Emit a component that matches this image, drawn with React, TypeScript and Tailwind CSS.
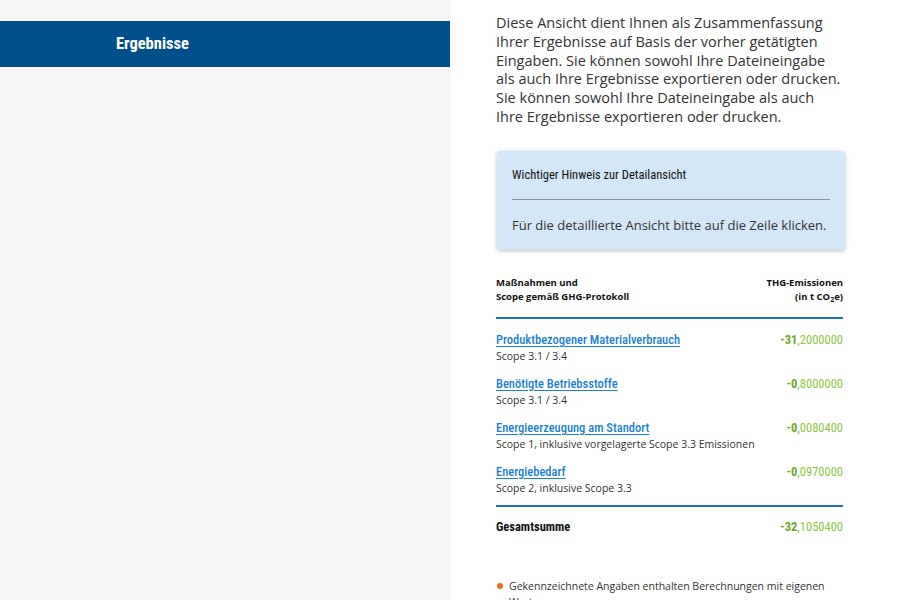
const rows = [
  { title: 'Produktbezogener Materialverbrauch', scope: 'Scope 3.1 / 3.4', whole: '-31', frac: ',2000000' },
  { title: 'Benötigte Betriebsstoffe', scope: 'Scope 3.1 / 3.4', whole: '-0', frac: ',8000000' },
  { title: 'Energieerzeugung am Standort', scope: 'Scope 1, inklusive vorgelagerte Scope 3.3 Emissionen', whole: '-0', frac: ',0080400' },
  { title: 'Energiebedarf', scope: 'Scope 2, inklusive Scope 3.3', whole: '-0', frac: ',0970000' },
];

export default function App() {
  return (
    <div className="flex w-[900px] h-[600px] overflow-hidden bg-white font-['Open_Sans',sans-serif]">
      <div className="w-[450px] h-full bg-[#f6f6f6] pt-[21px]">
        <div className="h-[46px] bg-[#004f8b] flex items-center pl-[116px]">
          <span className="text-white text-[16.5px] font-bold font-['Roboto_Condensed',sans-serif]">Ergebnisse</span>
        </div>
      </div>

      <div className="flex-1 pl-[46px] pr-[57px]">
        <p className="text-[14.5px] leading-[18.8px] text-[#333] pt-[14px]">
          Diese Ansicht dient Ihnen als Zusammenfassung<br />
          Ihrer Ergebnisse auf Basis der vorher getätigten<br />
          Eingaben. Sie können sowohl Ihre Dateineingabe<br />
          als auch Ihre Ergebnisse exportieren oder drucken.<br />
          Sie können sowohl Ihre Dateineingabe als auch<br />
          Ihre Ergebnisse exportieren oder drucken.
        </p>

        <div className="mt-[24px] ml-px -mr-[2px] bg-[#d4e7f8] rounded-[3px] shadow-[0_1px_4px_rgba(0,0,0,0.25)] px-[15px] pt-[16px] pb-[16px]">
          <div className="text-[12.5px] font-normal text-[#111] leading-[16px] font-['Roboto_Condensed',sans-serif]">Wichtiger Hinweis zur Detailansicht</div>
          <div className="h-px bg-[#8a8f96] mt-[16px] mb-[16px]" />
          <div className="text-[13px] text-[#333] leading-[18px]">Für die detaillierte Ansicht bitte auf die Zeile klicken.</div>
        </div>

        <div className="mt-[26px] flex justify-between text-[9.5px] font-bold text-[#111] leading-[14px]">
          <div>
            <div>Maßnahmen und</div>
            <div>Scope gemäß GHG-Protokoll</div>
          </div>
          <div className="text-right">
            <div>THG-Emissionen</div>
            <div>(in t CO<sub className="text-[7px]">2</sub>e)</div>
          </div>
        </div>
        <div className="h-[2px] bg-[#1f74c2] mt-[13px]" />

        <div className="pt-[13px]">
          {rows.map((r) => (
            <div key={r.title} className="flex justify-between h-[44px]">
              <div>
                <div className="text-[12.5px] font-medium leading-[16px] text-[#1a7fd4] underline underline-offset-2 font-['Roboto_Condensed',sans-serif]">{r.title}</div>
                <div className="text-[10.5px] leading-[16px] text-[#333]">{r.scope}</div>
              </div>
              <div className="text-[12.5px] leading-[16px] text-[#8dc63f] font-['Roboto_Condensed',sans-serif]">
                <span className="font-bold text-[#6ea82a]">{r.whole}</span>{r.frac}
              </div>
            </div>
          ))}
        </div>

        <div className="h-[2px] bg-[#1f74c2] -mt-[3px]" />
        <div className="flex justify-between mt-[12px]">
          <div className="text-[12.5px] font-bold text-[#111] leading-[16px] font-['Roboto_Condensed',sans-serif]">Gesamtsumme</div>
          <div className="text-[12.5px] leading-[16px] text-[#8dc63f] font-['Roboto_Condensed',sans-serif]">
            <span className="font-bold text-[#6ea82a]">-32</span>,1050400
          </div>
        </div>

        <div className="flex mt-[43px] text-[10.5px] leading-[16px] text-[#333]">
          <span className="w-[6px] h-[6px] rounded-full bg-[#f26b1d] mt-[5px] ml-[1px] mr-[6px] shrink-0" />
          <span>Gekennzeichnete Angaben enthalten Berechnungen mit eigenen Werten</span>
        </div>
      </div>
    </div>
  );
}
